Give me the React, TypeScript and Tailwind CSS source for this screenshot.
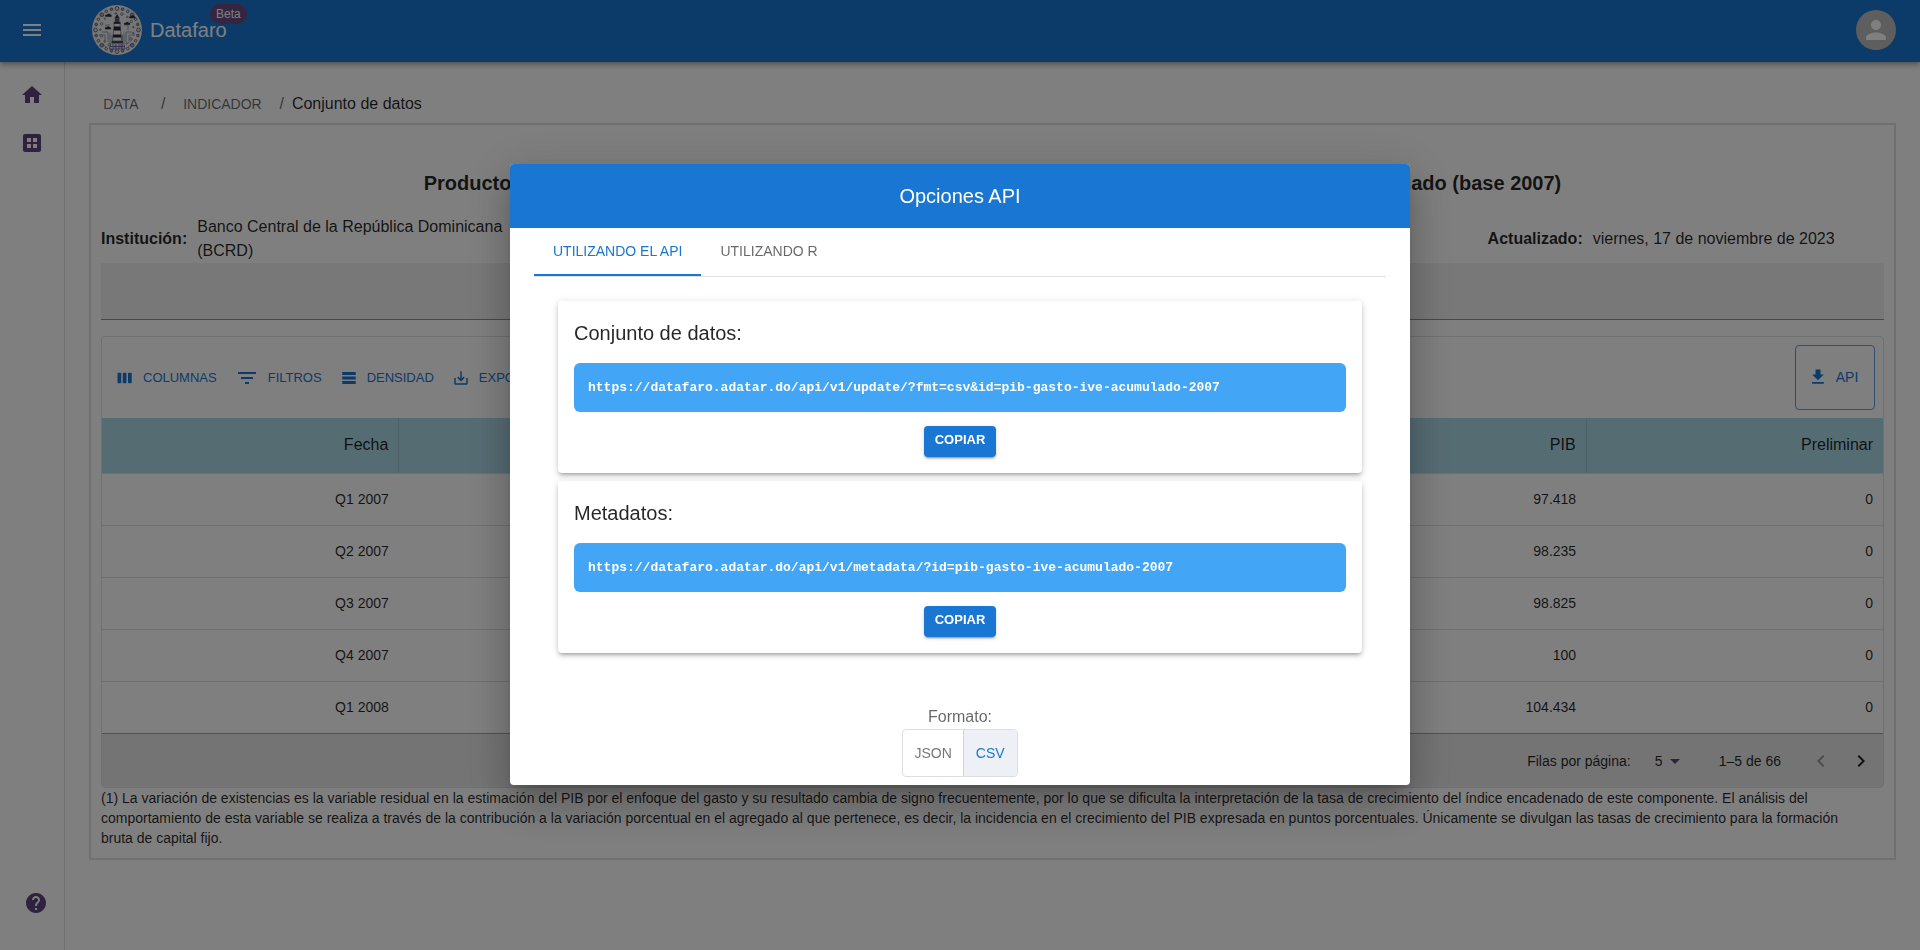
import { useState, type ReactNode } from 'react';
import { MdMenu, MdHome, MdHelp, MdPerson, MdFilterList, MdSaveAlt, MdArrowDropDown, MdKeyboardArrowLeft, MdKeyboardArrowRight } from 'react-icons/md';

const COLUMNS = ['Fecha', 'Consumo final', 'Formación bruta de capital', 'Exportaciones', 'PIB', 'Preliminar'];

const ROWS = [
  ['Q1 2007', '', '', '', '97.418', '0'],
  ['Q2 2007', '', '', '', '98.235', '0'],
  ['Q3 2007', '', '', '', '98.825', '0'],
  ['Q4 2007', '', '', '', '100', '0'],
  ['Q1 2008', '', '', '', '104.434', '0'],
];

const BASE = 'https://datafaro.adatar.do/api/v1';

function Logo() {
  const outer = Array.from({ length: 24 }, (_, i) => (i * 2 * Math.PI) / 24);
  const inner = Array.from({ length: 17 }, (_, i) => (i * 2 * Math.PI) / 17 + 0.2);
  return (
    <svg viewBox="0 0 50 50" className="size-[50px]" aria-hidden="true">
      <circle cx="25" cy="25" r="25" fill="#ededed" />
      {outer.map((a, i) => (
        <circle key={i} cx={25 + 21.5 * Math.cos(a)} cy={25 + 21.5 * Math.sin(a)} r={i % 3 === 0 ? 1.9 : 1.3} fill={i % 2 ? '#a2a2ac' : '#dcdce0'} stroke="#606078" strokeWidth="0.9" />
      ))}
      {inner.map((a, i) => (
        <circle key={i} cx={25 + 16.6 * Math.cos(a)} cy={25 + 16.6 * Math.sin(a)} r={i % 2 ? 1.3 : 0.8} fill={i % 4 === 0 ? '#7fa0b4' : '#dcdce0'} stroke="#77778c" strokeWidth="0.8" />
      ))}
      <g fill="none" stroke="#7f9db0" strokeWidth="0.9">
        <path d="M7 30h6v8M10 27h6v10M14 25v-5h4M43 30h-6v8M40 27h-6v10M36 25v-5h-4M18 28v11M32 28v11" />
        <path d="M12 40l4 4M38 40l-4 4M20 30v6M30.500 30v6" />
      </g>
      <g fill="#2a2a3a">
        <path d="M13 11c0-1 1-1.500 2-1.200.5-1.300 2.500-1.300 3 0 1.500-.2 2 1.200 1.500 2H13.500z" />
        <path d="M37 12.500c0-1 1-1.500 2-1.200.5-1.300 2.500-1.300 3 0 1.500-.2 2 1.200 1.500 2H37.500z" />
        <path d="M13 23.500c0-1 1-1.500 2-1.200.5-1.300 2.200-1.300 2.700 0 1.300-.2 1.800 1.200 1.300 2H13.500z" />
        <path d="M32 19c0-1 1-1.500 2-1.200.5-1.300 2.200-1.300 2.700 0 1.300-.2 1.800 1.200 1.300 2H32.500z" />
      </g>
      <path d="M22.300 18h5.600l1.800 18h-9.200z" fill="#f4f4f4" stroke="#55556a" strokeWidth="0.6" />
      <path d="M25.100 9l2.700 4.500h-5.400z" fill="#3b3560" />
      <path d="M22.800 13.500h4.600V18h-4.600z" fill="#5a5480" />
      <path d="M21.600 17.200h7v1.600h-7zM22 21.500h6.300l.4 4h-7.100zM21.200 29.500h7.900l.3 3h-8.500z" fill="#26263a" />
      <path d="M19.500 36h11.500v2.500H19.500z" fill="#4a4470" />
      <path d="M18.500 39l-1 5h15.500l-1-5M21 39v5M24 39v5M27 39v5M30 39v5M17.500 41.500h15.500" fill="none" stroke="#6a63a0" strokeWidth="0.9" />
    </svg>
  );
}

function Glyph({ d, className }: { d: string; className: string }) {
  return (
    <svg viewBox="0 0 24 24" fill="currentColor" className={className} aria-hidden="true">
      <path d={d} />
    </svg>
  );
}

function ToolbarButton({ icon, children }: { icon: ReactNode; children: ReactNode }) {
  return (
    <button className="flex items-center gap-[9px] text-[13px] leading-6 text-[#1976d2] uppercase">
      {icon}
      {children}
    </button>
  );
}

function EndpointCard({ title, url }: { title: string; url: string }) {
  return (
    <section className="rounded bg-white p-4 shadow-[0_3px_3px_-2px_rgba(0,0,0,0.2),0_3px_4px_0_rgba(0,0,0,0.14),0_1px_8px_0_rgba(0,0,0,0.12)]">
      <h3 className="text-xl leading-8 text-black/85">{title}</h3>
      <div className="mt-3.5 rounded-md bg-[#42a5f5] px-3.5 py-3">
        <code className="block font-['Liberation_Mono',monospace] text-[13px] leading-[25px] font-bold text-white">{url}</code>
      </div>
      <div className="mt-3.5 flex justify-center">
        <button
          onClick={() => navigator.clipboard?.writeText(url)}
          className="w-[72px] rounded bg-[#1976d2] pt-0.5 pb-[5px] text-[13px] leading-6 font-bold text-white shadow-[0_3px_1px_-2px_rgba(0,0,0,0.2),0_2px_2px_0_rgba(0,0,0,0.14),0_1px_5px_0_rgba(0,0,0,0.12)]"
        >
          COPIAR
        </button>
      </div>
    </section>
  );
}

function ApiDialog() {
  const [tab, setTab] = useState(0);
  const [format, setFormat] = useState('csv');
  return (
    <div className="fixed inset-0 z-20 flex items-center justify-center bg-black/50 pb-px">
      <div
        role="dialog"
        aria-modal="true"
        aria-labelledby="api-title"
        className="w-full max-w-[900px] overflow-hidden rounded bg-white pb-2 shadow-[0_11px_15px_-7px_rgba(0,0,0,0.2),0_24px_38px_3px_rgba(0,0,0,0.14),0_9px_46px_8px_rgba(0,0,0,0.12)]"
      >
        <h2 id="api-title" className="bg-[#1976d2] py-4 text-center text-xl leading-8 text-white">
          Opciones API
        </h2>
        <div className="px-6">
          <div role="tablist" className="flex border-b border-[#e0e0e4]">
            {['UTILIZANDO EL API', 'UTILIZANDO R'].map((label, i) => (
              <button
                key={label}
                role="tab"
                aria-selected={tab === i}
                onClick={() => setTab(i)}
                className={
                  tab === i
                    ? 'h-12 min-w-[134px] border-b-2 border-[#1976d2] px-[19px] text-sm text-[#1976d2]'
                    : 'h-12 min-w-[134px] border-b-2 border-transparent px-[19px] text-sm text-black/60'
                }
              >
                {label}
              </button>
            ))}
          </div>
          <div className="flex flex-col gap-2 p-6 pb-0">
            <EndpointCard title="Conjunto de datos:" url={`${BASE}/update/?fmt=${format}&id=pib-gasto-ive-acumulado-2007`} />
            <EndpointCard title="Metadatos:" url={`${BASE}/metadata/?id=pib-gasto-ive-acumulado-2007`} />
          </div>
          <div className="mt-[52px] flex flex-col items-center">
            <span id="format-label" className="text-base text-black/60">Formato:</span>
            <div role="group" aria-labelledby="format-label" className="flex h-12 overflow-hidden rounded border border-[#dcdee2] text-sm">
              <button
                aria-pressed={format === 'json'}
                onClick={() => setFormat('json')}
                className={format === 'json' ? 'bg-[#edf1f5] px-[11px] text-[#1976d2]' : 'px-[11px] text-black/55'}
              >
                JSON
              </button>
              <button
                aria-pressed={format === 'csv'}
                onClick={() => setFormat('csv')}
                className={
                  format === 'csv'
                    ? 'border-l border-[#d0d3d8] bg-[#edf1f5] px-3 text-[#1976d2]'
                    : 'border-l border-[#d0d3d8] px-3 text-black/55'
                }
              >
                CSV
              </button>
            </div>
          </div>
        </div>
      </div>
    </div>
  );
}

export default function App() {
  return (
    <div className="flex min-h-screen flex-col bg-white font-['Liberation_Sans',Arial,sans-serif] text-black/85">
      <header className="z-10 flex h-[62px] items-center bg-[#1976d2] pr-6 pb-0.5 pl-5 text-white shadow-[0_2px_4px_-1px_rgba(0,0,0,0.2),0_4px_5px_0_rgba(0,0,0,0.14),0_1px_10px_0_rgba(0,0,0,0.12)]">
        <button aria-label="Menú" className="mr-12">
          <MdMenu className="size-6" />
        </button>
        <a href="#inicio" className="relative flex items-center gap-2">
          <Logo />
          <span className="text-xl">Datafaro</span>
          <span className="absolute -top-px left-[118px] h-5 rounded-full bg-[#6a4a80] px-1.5 text-xs leading-5">Beta</span>
        </a>
        <button aria-label="Cuenta" className="ml-auto flex size-10 items-center justify-center rounded-full bg-[#bdbdbd]">
          <MdPerson className="size-[30px]" />
        </button>
      </header>

      <div className="flex flex-1">
        <aside className="flex w-[65px] shrink-0 flex-col border-r border-black/12 pt-[21px] pb-[35px] pl-5 text-[#5f447c]">
          <nav className="flex flex-col gap-6">
            <a href="#inicio" aria-label="Inicio">
              <MdHome className="size-6" />
            </a>
            <a href="#datos" aria-label="Datos">
              <Glyph
                className="size-6"
                d="M19 3H5c-1.100 0-2 .9-2 2v14c0 1.100.9 2 2 2h14c1.100 0 2-.9 2-2V5c0-1.100-.9-2-2-2zm-8 14H7v-4h4v4zm0-6H7V7h4v4zm6 6h-4v-4h4v4zm0-6h-4V7h4v4z"
              />
            </a>
          </nav>
          <a href="#ayuda" aria-label="Ayuda" className="mt-auto ml-1">
            <MdHelp className="size-6" />
          </a>
        </aside>

        <main className="min-w-0 flex-1 px-6 pt-6">
          <nav aria-label="Ruta" className="flex h-[37px] items-center pb-0.5 text-base text-black/60">
            <a href="#data" className="min-w-16 px-2 text-center text-sm">DATA</a>
            <span className="mx-2">/</span>
            <a href="#indicador" className="min-w-[98px] px-2 text-center text-sm">INDICADOR</a>
            <span className="mx-2">/</span>
            <span className="text-black/85">Conjunto de datos</span>
          </nav>

          <section className="border-2 border-black/12 p-2.5">
            <h1 className="mt-8 mb-4 text-center text-xl leading-8 font-bold">
              Producto Interno Bruto (PIB) por el enfoque del gasto, con Índice de Volumen Encadenado (IVE) acumulado (base 2007)
            </h1>
            <div className="flex items-center justify-between text-base">
              <div className="flex w-1/4 items-center gap-2.5">
                <strong>Institución:</strong>
                <span>Banco Central de la República Dominicana (BCRD)</span>
              </div>
              <div className="flex w-1/4 items-center justify-center gap-2.5">
                <strong>Actualizado:</strong>
                <span>viernes, 17 de noviembre de 2023</span>
              </div>
            </div>
            <div className="h-[57px] border-b border-black/40 bg-black/6" />

            <div className="mt-4 overflow-hidden rounded border border-black/12">
              <div className="flex items-center gap-[18px] py-2 pr-2 pl-3.5">
                <ToolbarButton
                  icon={<Glyph className="size-[18px]" d="M6 5H3c-.55 0-1 .45-1 1v12c0 .55.45 1 1 1h3c.55 0 1-.45 1-1V6c0-.55-.45-1-1-1zm14 0h-3c-.55 0-1 .45-1 1v12c0 .55.45 1 1 1h3c.55 0 1-.45 1-1V6c0-.55-.45-1-1-1zm-7 0h-3c-.55 0-1 .45-1 1v12c0 .55.45 1 1 1h3c.55 0 1-.45 1-1V6c0-.55-.45-1-1-1z" />}
                >
                  Columnas
                </ToolbarButton>
                <ToolbarButton icon={<MdFilterList className="size-6" />}>Filtros</ToolbarButton>
                <ToolbarButton icon={<Glyph className="size-[18px]" d="M21 8H3V4h18v4zm0 2H3v4h18v-4zm0 6H3v4h18v-4z" />}>Densidad</ToolbarButton>
                <ToolbarButton icon={<MdSaveAlt className="size-[18px]" />}>Exportar</ToolbarButton>
                <button className="ml-auto flex h-[65px] w-20 items-center justify-center gap-2 rounded border border-[#1976d2]/70 pr-1 pb-px text-sm text-[#1976d2]">
                  <Glyph className="size-5" d="M5 20h14v-2H5v2zM19 9h-4V3H9v6H5l7 7 7-7z" />
                  API
                </button>
              </div>

              <table className="w-full table-fixed border-collapse text-right text-sm">
                <thead>
                  <tr className="h-[55px] border-b border-black/12 bg-[#add8e6] text-base">
                    {COLUMNS.map((name) => (
                      <th key={name} scope="col" className="border-r border-black/10 px-2.5 font-normal last:border-r-0">
                        {name}
                      </th>
                    ))}
                  </tr>
                </thead>
                <tbody>
                  {ROWS.map((row) => (
                    <tr key={row[0]} className="h-[52px] border-b border-black/12 last:border-b-0">
                      {row.map((cell, i) => (
                        <td key={i} className="px-2.5">{cell}</td>
                      ))}
                    </tr>
                  ))}
                </tbody>
              </table>

              <div className="flex h-[54px] items-center justify-end border-t border-black/30 bg-[#e8e8e8] pr-0.5 text-sm">
                <label htmlFor="page-size">Filas por página:</label>
                <div className="relative mr-8 ml-6">
                  <select id="page-size" defaultValue="5" className="w-8 appearance-none bg-transparent">
                    <option>5</option>
                    <option>10</option>
                    <option>25</option>
                  </select>
                  <MdArrowDropDown className="pointer-events-none absolute -top-0.5 right-0 size-6 text-[#5f447c]" />
                </div>
                <span className="mr-5">1–5 de 66</span>
                <button aria-label="Página anterior" disabled className="flex size-10 items-center justify-center text-black/35">
                  <MdKeyboardArrowLeft className="size-6" />
                </button>
                <button aria-label="Página siguiente" className="flex size-10 items-center justify-center">
                  <MdKeyboardArrowRight className="size-6" />
                </button>
              </div>
            </div>

            <p className="pr-4 text-sm">
              (1) La variación de existencias es la variable residual en la estimación del PIB por el enfoque del gasto y su resultado
              cambia de signo frecuentemente, por lo que se dificulta la interpretación de la tasa de crecimiento del índice encadenado
              de este componente. El análisis del comportamiento de esta variable se realiza a través de la contribución a la variación
              porcentual en el agregado al que pertenece, es decir, la incidencia en el crecimiento del PIB expresada en puntos
              porcentuales. Únicamente se divulgan las tasas de crecimiento para la formación bruta de capital fijo.
            </p>
          </section>
        </main>
      </div>

      <ApiDialog />
    </div>
  );
}
